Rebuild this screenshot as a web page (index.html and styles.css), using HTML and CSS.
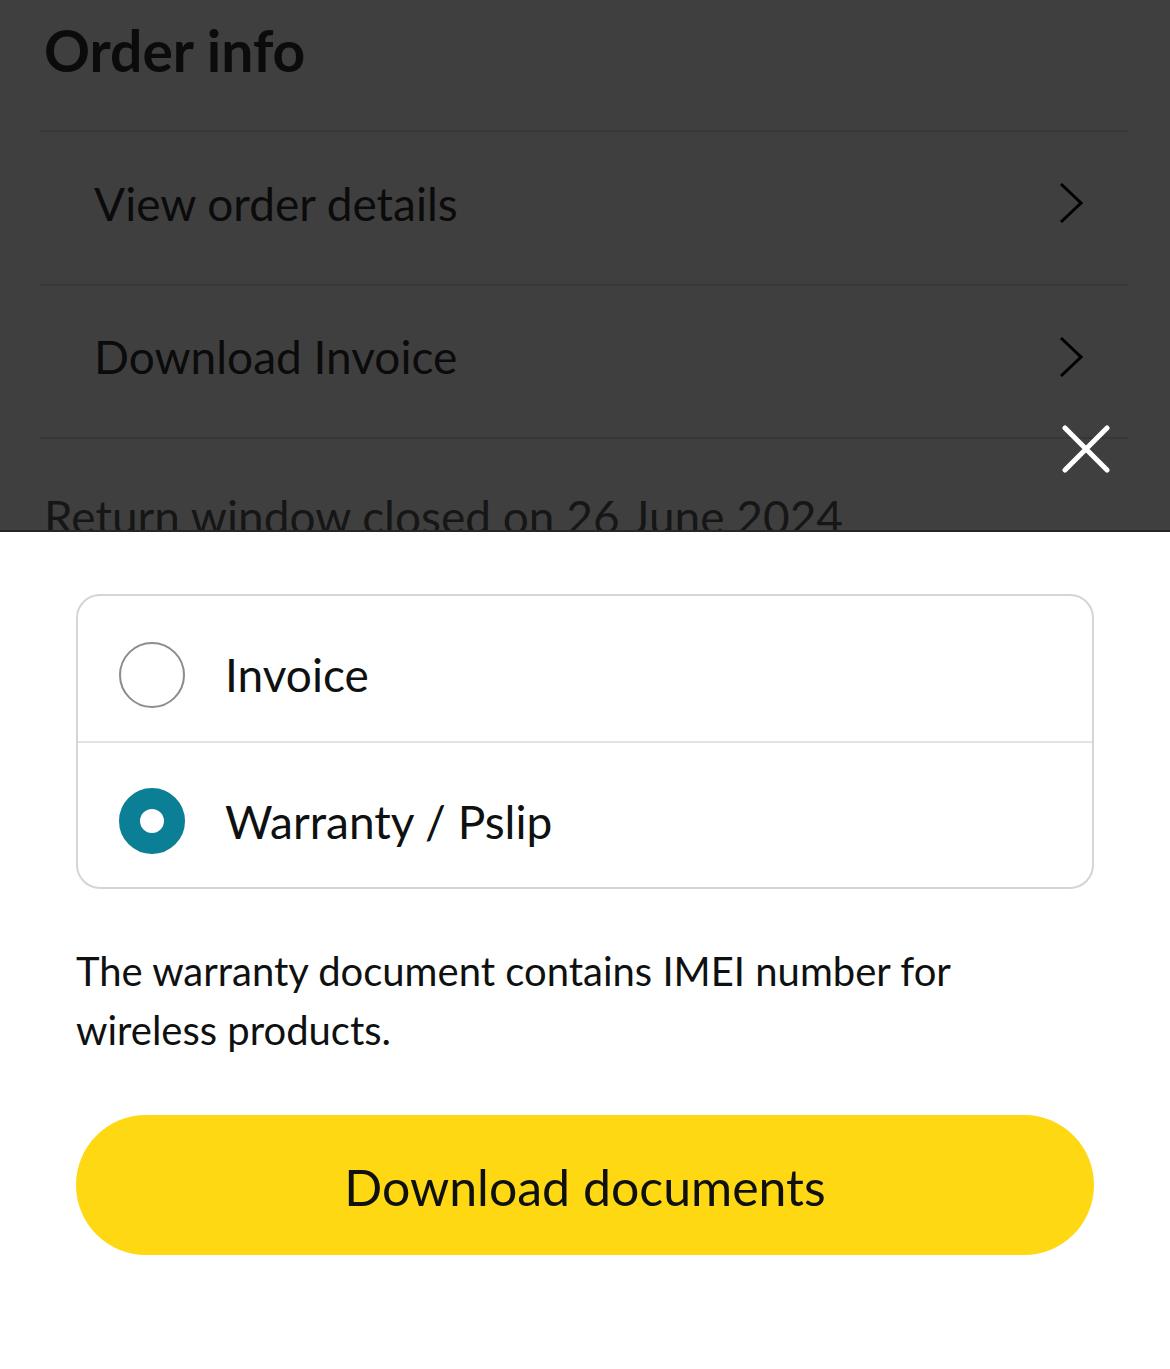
FILE: index.html
```html
<!DOCTYPE html>
<html lang="en">
<head>
    <meta charset="UTF-8">
    <title>Order info</title>
    <link rel="stylesheet" href="styles.css">
</head>
<body>
    <div class="backdrop">
        <h1>Order info</h1>
        <div class="menu">
            <div class="menu-row">
                <span>View order details</span>
                <svg class="chevron" width="26" height="42" viewBox="0 0 26 42"><polyline points="3,2 23,21 3,40" fill="none" stroke="#000" stroke-width="3"/></svg>
            </div>
            <div class="menu-row">
                <span>Download Invoice</span>
                <svg class="chevron" width="26" height="42" viewBox="0 0 26 42"><polyline points="3,2 23,21 3,40" fill="none" stroke="#000" stroke-width="3"/></svg>
            </div>
        </div>
        <p class="return-note">Return window closed on 26 June 2024</p>
        <button class="close" aria-label="Close">
            <svg width="48" height="48" viewBox="0 0 48 48"><path d="M3 3 L45 45 M45 3 L3 45" stroke="#fff" stroke-width="5" stroke-linecap="round"/></svg>
        </button>
    </div>

    <div class="sheet">
        <div class="options">
            <label class="option">
                <span class="radio"></span>
                <span>Invoice</span>
            </label>
            <label class="option">
                <span class="radio checked"></span>
                <span>Warranty / Pslip</span>
            </label>
        </div>
        <p class="hint">The warranty document contains IMEI number for wireless products.</p>
        <button class="download">Download documents</button>
    </div>
</body>
</html>
```

FILE: styles.css
```css
body {
    margin: 0;
    font-family: 'Lato', 'Liberation Sans', sans-serif;
    background: #ffffff;
    color: #0f1111;
}
.backdrop {
    position: relative;
    height: 530px;
    overflow: hidden;
    background: #3f3f3f; /* pagina oscurecida */
    color: #0b0b0b;
    padding: 0 42px 0 40px;
    border-bottom: 2px solid #262626;
}
h1 {
    margin: 0;
    padding: 18px 0 0 4px;
    height: 130px;
    box-sizing: border-box;
    font-size: 57px;
    font-weight: 700;
    line-height: 64px;
}
.menu-row {
    display: flex;
    align-items: center;
    justify-content: space-between;
    height: 154px;
    box-sizing: border-box;
    padding: 0 44px 10px 54px;
    border-top: 2px solid #373737;
    font-size: 46px;
}
.menu-row:last-child {
    height: 155px;
    border-bottom: 2px solid #373737;
}
.return-note {
    margin: 0;
    padding: 50px 0 0 4px;
    font-size: 46px;
    line-height: 56px;
    color: #161616;
}
.close {
    position: absolute;
    top: 425px;
    right: 60px;
    padding: 0;
    border: none;
    background: none;
}
.sheet {
    padding: 62px 76px 100px;
}
.options {
    border: 2px solid #d5d5d5;
    border-radius: 24px;
}
.option {
    display: flex;
    align-items: center;
    height: 145px;
    box-sizing: border-box;
    padding: 12px 0 0 41px;
    font-size: 46px;
}
.option + .option {
    border-top: 2px solid #e3e3e3;
    height: 146px;
}
.radio {
    width: 66px;
    height: 66px;
    margin-right: 40px;
    border: 2px solid #8c8c8c;
    border-radius: 50%;
    box-sizing: border-box;
    background: #fff;
}
.radio.checked {
    border: 21px solid #0b7f95;
}
.hint {
    margin: 53px 0 55px;
    font-size: 40px;
    line-height: 59px;
    width: 900px;
}
.download {
    display: block;
    width: 100%;
    height: 140px;
    padding-top: 4px;
    border: none;
    border-radius: 70px;
    background: #fed813;
    color: #0f1111;
    font-family: inherit;
    font-size: 50px;
}
```
